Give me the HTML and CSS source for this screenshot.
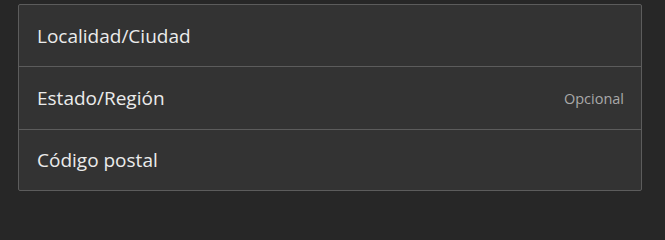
FILE: index.html
```html
<!DOCTYPE html>
<html>
<head>
<meta charset="utf-8">
<link rel="stylesheet" href="styles.css">
</head>
<body>
<div class="card">
  <div class="row"><span class="label">Localidad/Ciudad</span></div>
  <div class="row"><span class="label">Estado/Región</span><span class="hint">Opcional</span></div>
  <div class="row"><span class="label">Código postal</span></div>
</div>
</body>
</html>
```
FILE: styles.css
```css
html, body {
  margin: 0;
  padding: 0;
  background: #272727;
}
body {
  padding: 4px 22px 0 18px;
  font-family: "Open Sans", "Noto Sans", sans-serif;
}
.card {
  background: #333333;
  border: 1px solid #5c5c5c;
  border-radius: 2px;
  width: 622px;
}
.row {
  display: flex;
  align-items: center;
  justify-content: space-between;
  height: 61px;
  padding: 0 17px 0 18px;
  border-top: 1px solid #5c5c5c;
}
.row:first-child {
  border-top: none;
}
.row:nth-child(2) {
  height: 62px;
}
.row:last-child {
  height: 60px;
}
.label {
  color: #ebebeb;
  font-size: 19px;
}
.hint {
  color: #a9a9a9;
  font-size: 14.5px;
}
```
